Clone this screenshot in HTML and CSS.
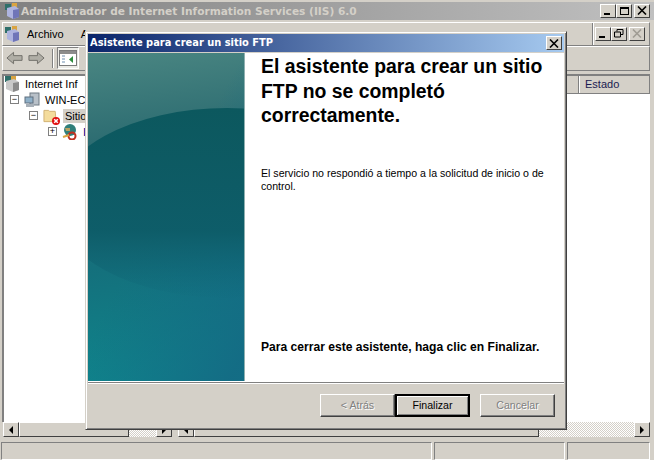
FILE: index.html
```html
<!DOCTYPE html>
<html lang="es">
<head>
  <meta charset="UTF-8">
  <title>Administrador de Internet Information Services (IIS) 6.0</title>
  <link rel="stylesheet" href="styles.css">
</head>
<body>
  <div class="window">
    <div class="titlebar">
      <svg class="app-icon" viewBox="0 0 16 16"><rect x="1" y="1" width="6" height="6" fill="#2f6f6a"/><rect x="8" y="0" width="5" height="5" fill="#d9a441"/><path d="M3 5l8-2 4 3v8l-6 2-6-3z" fill="#aeb4e0"/><path d="M9 7l6-1v8l-6 2z" fill="#6f75b8"/></svg>
      <span class="titlebar-text">Administrador de Internet Information Services (IIS) 6.0</span>
      <div class="caption-btns">
        <span class="cap-btn"><i class="glyph-min"></i></span>
        <span class="cap-btn"><i class="glyph-max"></i></span>
        <span class="cap-btn gap"><svg viewBox="0 0 10 9"><path d="M1 0.5l8 8M9 0.5l-8 8" stroke="#000" stroke-width="1.6" fill="none"/></svg></span>
      </div>
    </div>

    <div class="menubar">
      <div class="menu-main">
        <svg class="app-icon" viewBox="0 0 16 16"><rect x="1" y="1" width="6" height="6" fill="#2f6f6a"/><rect x="8" y="0" width="5" height="5" fill="#d9a441"/><path d="M3 5l8-2 4 3v8l-6 2-6-3z" fill="#aeb4e0"/><path d="M9 7l6-1v8l-6 2z" fill="#6f75b8"/></svg>
        <span class="menu-item">Archivo</span>
        <span class="menu-item">A</span>
      </div>
      <div class="menu-side">
        <span class="cap-btn"><i class="glyph-min"></i></span>
        <span class="cap-btn"><svg viewBox="0 0 10 9"><path d="M3 2.5V.5h6v5H7M.5 3h6v5h-6z" stroke="#000" fill="none"/></svg></span>
        <span class="cap-btn gap"><svg viewBox="0 0 10 9"><path d="M1 0.5l8 8M9 0.5l-8 8" stroke="#a09c94" stroke-width="1.6" fill="none"/></svg></span>
      </div>
    </div>

    <div class="toolbar">
      <svg class="nav-arrow" viewBox="0 0 18 14"><path d="M1 7l7-6v3.500h9v5H8V13z" fill="#b0aea6" stroke="#6f6d68"/></svg>
      <svg class="nav-arrow" viewBox="0 0 18 14"><path d="M17 7l-7-6v3.500H1v5h9V13z" fill="#b0aea6" stroke="#6f6d68"/></svg>
      <span class="tool-sep"></span>
      <span class="tool-btn">
        <svg viewBox="0 0 18 16"><rect x=".5" y=".5" width="17" height="15" fill="#fff" stroke="#7a7a7a"/><rect x="1" y="1" width="16" height="3" fill="#8c8c8c"/><path d="M3 6h3M3 9h3M3 12h3" stroke="#6f8fb0"/><path d="M14 6v7l-4-3.500z" fill="#2e8b3e"/></svg>
      </span>
    </div>

    <div class="panes">
      <div class="tree">
        <div class="tree-row">
          <svg class="tree-icon" viewBox="0 0 16 16"><rect x="1" y="0" width="6" height="6" fill="#2f6f6a"/><rect x="7" y="0" width="5" height="4" fill="#d9a441"/><path d="M2 5l8-2 5 3v8l-6 2-7-3z" fill="#c8c8c8"/><path d="M9 7l6-1v8l-6 2z" fill="#8a8a8a"/></svg>
          <span>Internet Inf</span>
        </div>
        <div class="tree-row level-1">
          <span class="expander">−</span>
          <svg class="tree-icon" viewBox="0 0 16 16"><rect x="6" y="1" width="9" height="12" fill="#b8c0c8" stroke="#6f7a84"/><rect x="1" y="5" width="8" height="6" fill="#8fb0c8" stroke="#5f6f7f"/><rect x="2" y="12" width="8" height="3" fill="#a8b0b8"/></svg>
          <span>WIN-ECI</span>
        </div>
        <div class="tree-row level-2">
          <span class="expander">−</span>
          <span class="folder-icon">
            <svg class="tree-icon" viewBox="0 0 16 16"><path d="M1 2h5l1 1h6l1 11H1z" fill="#f4dc9c" stroke="#d0b070"/></svg>
            <svg class="badge-x" viewBox="0 0 8 8"><circle cx="4" cy="4" r="4" fill="#e01010"/><path d="M2.200 2.200l3.600 3.600M5.800 2.200L2.200 5.800" stroke="#fff" stroke-width="1.500"/></svg>
          </span>
          <span class="selected">Sitio</span>
        </div>
        <div class="tree-row level-3">
          <span class="expander">+</span>
          <svg class="tree-icon" viewBox="0 0 16 16"><circle cx="8" cy="6" r="6" fill="#2f7f7a"/><path d="M3 4h5v3H4z" fill="#b8a060"/><circle cx="10" cy="12" r="3.500" fill="none" stroke="#c03020" stroke-width="2"/><path d="M1 13l6-2" stroke="#d9a441" stroke-width="2"/></svg>
          <span class="site-name">I</span>
        </div>
      </div>
      <div class="list">
        <div class="list-head">
          <span class="col col-name"></span>
          <span class="col col-state">Estado</span>
        </div>
        <div class="list-body"></div>
      </div>
    </div>

    <div class="scrollbars">
      <div class="scroll scroll-left">
        <span class="scroll-btn"><i class="arrow-left"></i></span>
        <span class="scroll-thumb"></span>
        <span class="scroll-track"></span>
        <span class="scroll-btn"><i class="arrow-right"></i></span>
      </div>
      <div class="scroll scroll-right">
        <span class="scroll-btn"><i class="arrow-left"></i></span>
        <span class="scroll-thumb"></span>
        <span class="scroll-track"></span>
        <span class="scroll-btn"><i class="arrow-right"></i></span>
      </div>
    </div>

    <div class="statusbar">
      <span class="status-cell status-a"></span>
      <span class="status-cell status-b"></span>
      <span class="status-cell status-c"></span>
    </div>
  </div>

  <div class="dialog">
    <div class="dialog-title">
      <span class="dialog-title-text">Asistente para crear un sitio FTP</span>
      <span class="cap-btn"><svg viewBox="0 0 10 9"><path d="M1 0.5l8 8M9 0.5l-8 8" stroke="#000" stroke-width="1.6" fill="none"/></svg></span>
    </div>
    <div class="dialog-main">
      <div class="wizard-art">
        <svg viewBox="0 0 157 328" preserveAspectRatio="none">
          <defs>
            <linearGradient id="artBase" gradientUnits="userSpaceOnUse" x1="0" y1="0" x2="40" y2="328">
              <stop offset="0" stop-color="#4a8682"/>
              <stop offset="0.3" stop-color="#2a6a70"/>
              <stop offset="0.65" stop-color="#14707c"/>
              <stop offset="1" stop-color="#0f858c"/>
            </linearGradient>
            <linearGradient id="artRight" gradientUnits="userSpaceOnUse" x1="30" y1="230" x2="157" y2="300">
              <stop offset="0" stop-color="#146a84" stop-opacity="0"/>
              <stop offset="1" stop-color="#146a84" stop-opacity="0.9"/>
            </linearGradient>
            <linearGradient id="artDark" gradientUnits="userSpaceOnUse" x1="0" y1="55" x2="0" y2="245">
              <stop offset="0" stop-color="#0c585e"/>
              <stop offset="0.65" stop-color="#0d5c68" stop-opacity="0.95"/>
              <stop offset="1" stop-color="#0f6678" stop-opacity="0.05"/>
            </linearGradient>
          </defs>
          <rect width="157" height="328" fill="url(#artBase)"/>
          <rect width="157" height="328" fill="url(#artRight)"/>
          <ellipse cx="140" cy="150" rx="174" ry="95" fill="url(#artDark)"/>
        </svg>
      </div>
      <div class="wizard-body">
        <h1>El asistente para crear un sitio FTP no se completó correctamente.</h1>
        <p class="wizard-msg">El servicio no respondió a tiempo a la solicitud de inicio o de control.</p>
        <p class="wizard-close">Para cerrar este asistente, haga clic en Finalizar.</p>
      </div>
    </div>
    <div class="dialog-buttons">
      <button class="btn" disabled>&lt; Atrás</button>
      <button class="btn btn-default">Finalizar</button>
      <button class="btn btn-cancel" disabled>Cancelar</button>
    </div>
  </div>
</body>
</html>
```
FILE: styles.css
```css
html, body {
  margin: 0;
  height: 460px;
  overflow: hidden;
}
body {
  background: #d4d0c8;
  font-family: "Liberation Sans", Arial, sans-serif;
  font-size: 11px;
  color: #000;
  position: relative;
}
.window {
  height: 460px;
  display: flex;
  flex-direction: column;
}

/* title bar */
.titlebar {
  height: 18px;
  margin-top: 2px;
  padding: 0 4px;
  display: flex;
  align-items: center;
  gap: 1px;
  background: linear-gradient(90deg, #808080, #c0c0c0);
}
.titlebar-text {
  font-family: "DejaVu Sans", Verdana, sans-serif;
  font-weight: bold;
  font-size: 10.6px;
  color: #d4d0c8;
  flex: 1;
  white-space: nowrap;
}
.app-icon {
  width: 16px;
  height: 16px;
  flex: none;
}
.caption-btns, .menu-side {
  display: flex;
}
.cap-btn {
  width: 16px;
  height: 14px;
  box-sizing: border-box;
  background: #d4d0c8;
  border: 1px solid;
  border-color: #fff #404040 #404040 #fff;
  display: flex;
  align-items: center;
  justify-content: center;
}
.cap-btn.gap {
  margin-left: 2px;
}
.cap-btn svg {
  width: 10px;
  height: 9px;
}
.glyph-min {
  width: 6px;
  height: 2px;
  background: #000;
  margin-top: 7px;
  margin-right: 3px;
}
.glyph-max {
  width: 9px;
  height: 8px;
  box-sizing: border-box;
  border: 1px solid #000;
  border-top-width: 2px;
}

/* menu + toolbar */
.menubar {
  height: 24px;
  margin: 2px 4px 0 2px;
  display: flex;
  border: 1px solid;
  border-color: #fff #808080 #808080 #fff;
  box-sizing: border-box;
  padding-right: 4px;
}
.menu-main {
  flex: 1;
  display: flex;
  align-items: center;
  padding-left: 1px;
  gap: 7px;
  border-right: 1px solid #808080;
  box-shadow: 1px 0 0 #fff;
  margin-right: 2px;
}
.menu-item {
  font-size: 11px;
  padding-right: 10px;
}
.menu-side {
  align-items: center;
}
.toolbar {
  height: 25px;
  margin: 0 4px 0 2px;
  box-sizing: border-box;
  border: 1px solid;
  border-color: #fff #808080 #808080 #fff;
  display: flex;
  align-items: center;
  padding-left: 3px;
  gap: 5px;
}
.nav-arrow {
  width: 17px;
  height: 14px;
}
.tool-sep {
  width: 0;
  height: 19px;
  margin: 0 -2px 0 2px;
  border-left: 1px solid #808080;
  border-right: 1px solid #fff;
}
.tool-btn {
  width: 22px;
  height: 22px;
  box-sizing: border-box;
  border: 1px solid;
  border-color: #808080 #fff #fff #808080;
  background: #ecebe6;
  display: flex;
  align-items: center;
  justify-content: center;
}
.tool-btn svg {
  width: 18px;
  height: 16px;
}

/* panes */
.panes {
  height: 347px;
  margin: 3px 4px 0 2px;
  display: flex;
  border-top: 2px solid #808080;
  border-left: 2px solid #808080;
  background: #fff;
}
.tree {
  width: 280px;
  flex: none;
  overflow: hidden;
}
.tree-row {
  height: 16px;
  display: flex;
  align-items: center;
  gap: 5px;
  white-space: nowrap;
  font-size: 11px;
}
.level-1 {
  padding-left: 6px;
}
.level-2 {
  padding-left: 25px;
}
.level-3 {
  padding-left: 44px;
}
.tree-icon {
  width: 16px;
  height: 16px;
  flex: none;
}
.expander {
  width: 9px;
  height: 9px;
  box-sizing: border-box;
  border: 1px solid #808080;
  font-size: 9px;
  line-height: 7px;
  text-align: center;
  flex: none;
}
.folder-icon {
  position: relative;
  width: 15px;
  height: 16px;
}
.folder-icon .tree-icon {
  width: 15px;
}
.badge-x {
  position: absolute;
  right: -2px;
  bottom: -1px;
  width: 8px;
  height: 8px;
}
.selected {
  background: #d4d0c8;
  padding: 1px 2px;
}
.site-name {
  color: #00008b;
}
.list {
  flex: 1;
  min-width: 0;
  display: flex;
  flex-direction: column;
}
.list-head {
  height: 17px;
  display: flex;
  background: #d4d0c8;
  border-bottom: 1px solid #808080;
}
.col {
  box-sizing: border-box;
  padding-left: 5px;
  border-left: 1px solid #fff;
  border-right: 1px solid #808080;
  line-height: 16px;
  color: #1a1a50;
}
.col-name {
  width: 295px;
}
.col-state {
  flex: 1;
}
.list-body {
  flex: 1;
}

/* scrollbars */
.scrollbars {
  height: 15px;
  margin: 0 4px 0 3px;
  display: flex;
  gap: 6px;
}
.scroll {
  display: flex;
  background: repeating-conic-gradient(#fff 0 25%, #d4d0c8 0 50%) 0 0 / 2px 2px;
}
.scroll-left {
  width: 169px;
}
.scroll-right {
  flex: 1;
}
.scroll-btn {
  width: 16px;
  box-sizing: border-box;
  background: #d4d0c8;
  border: 1px solid;
  border-color: #fff #404040 #404040 #fff;
  display: flex;
  align-items: center;
  justify-content: center;
  flex: none;
}
.scroll-thumb {
  width: 110px;
  box-sizing: border-box;
  background: #d4d0c8;
  border: 1px solid;
  border-color: #fff #404040 #404040 #fff;
}
.scroll-track {
  flex: 1;
}
.scroll-right .scroll-thumb {
  width: 345px;
}
.arrow-left {
  border-style: solid;
  border-width: 4px 4px 4px 0;
  border-color: transparent #000 transparent transparent;
}
.arrow-right {
  border-style: solid;
  border-width: 4px 0 4px 4px;
  border-color: transparent transparent transparent #000;
}

/* status bar */
.statusbar {
  height: 18px;
  margin-top: 5px;
  padding: 0 4px 0 1px;
  display: flex;
  gap: 2px;
}
.status-cell {
  box-sizing: border-box;
  border: 1px solid;
  border-color: #808080 #fff #fff #808080;
}
.status-a {
  width: 431px;
}
.status-b {
  width: 131px;
}
.status-c {
  flex: 1;
}

/* wizard dialog */
.dialog {
  position: absolute;
  left: 85px;
  top: 31px;
  width: 482px;
  height: 399px;
  box-sizing: border-box;
  background: #d4d0c8;
  border: 1px solid;
  border-color: #d4d0c8 #404040 #404040 #d4d0c8;
  box-shadow: inset 1px 1px 0 #fff, inset -1px -1px 0 #808080;
  padding: 2px;
  display: flex;
  flex-direction: column;
}
.dialog-title {
  height: 18px;
  flex: none;
  background: linear-gradient(90deg, #0a246a, #a6caf0);
  display: flex;
  align-items: center;
  justify-content: space-between;
  padding: 0 2px;
  color: #fff;
  font-family: "DejaVu Sans", Verdana, sans-serif;
  font-weight: bold;
  font-size: 9.9px;
  white-space: nowrap;
}
.dialog-title-text {
  padding-bottom: 2px;
}
.dialog-main {
  height: 329px;
  flex: none;
  display: flex;
  background: #fff;
  margin-top: 1px;
  border-bottom: 1px solid #808080;
  box-shadow: 0 1px 0 #fff;
}
.wizard-art {
  width: 157px;
  height: 328px;
  flex: none;
  box-sizing: border-box;
  border-right: 1px solid #8fb0b0;
}
.wizard-art svg {
  width: 156px;
  height: 328px;
  display: block;
}
.wizard-body {
  flex: 1;
  padding: 1px 15px 0 16px;
  display: flex;
  flex-direction: column;
}
h1 {
  font-family: "Liberation Sans", Arial, sans-serif;
  font-size: 19.4px;
  line-height: 24.5px;
  font-weight: bold;
  margin: 0 0 39px 0;
}
.wizard-msg {
  margin: 0;
  font-size: 10.6px;
  line-height: 13.500px;
}
.wizard-close {
  margin: auto 0 28px 0;
  font-size: 12.1px;
  font-weight: bold;
}
.dialog-buttons {
  flex: 1;
  display: flex;
  align-items: center;
  justify-content: flex-end;
  padding: 0 9px 0 0;
}
.btn {
  width: 75px;
  height: 23px;
  box-sizing: border-box;
  background: #d4d0c8;
  border: 1px solid;
  border-color: #fff #404040 #404040 #fff;
  box-shadow: inset -1px -1px 0 #808080;
  font-family: "Liberation Sans", Arial, sans-serif;
  font-size: 10.6px;
  padding: 0;
  color: #000;
}
.btn:disabled {
  color: #808080;
  text-shadow: 1px 1px 0 #fff;
}
.btn-default {
  border: 2px solid #000;
  box-shadow: inset 1px 1px 0 #fff, inset -1px -1px 0 #808080;
}
.btn-cancel {
  margin-left: 10px;
}
```
